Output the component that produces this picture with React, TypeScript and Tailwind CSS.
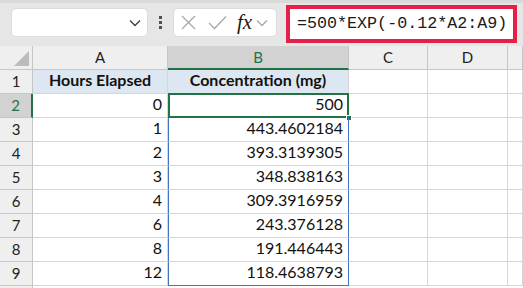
import React from 'react';

const rows: { n: number; a: string; b: string }[] = [
  { n: 2, a: '0', b: '500' },
  { n: 3, a: '1', b: '443.4602184' },
  { n: 4, a: '2', b: '393.3139305' },
  { n: 5, a: '3', b: '348.838163' },
  { n: 6, a: '4', b: '309.3916959' },
  { n: 7, a: '6', b: '243.376128' },
  { n: 8, a: '8', b: '191.446443' },
  { n: 9, a: '12', b: '118.4638793' },
];

const Chevron = ({ color }: { color: string }) => (
  <svg width="12" height="8" viewBox="0 0 12 8" fill="none">
    <path d="M1 1.5 L6 6.5 L11 1.5" stroke={color} strokeWidth="1.4" />
  </svg>
);

const Toolbar = () => (
  <div className="relative h-[46px] bg-[#e6e6e6]">
    <div className="h-[3px] bg-[#dadada]" />
    <div className="flex items-center h-[36px] pt-[3px]">
      {/* name box */}
      <div className="ml-[11px] w-[137px] h-[29px] bg-white rounded-[5px] border border-[#dcdcdc] flex items-center justify-end pr-[6px]">
        <Chevron color="#404040" />
      </div>
      {/* grip */}
      <div className="ml-[11px] flex flex-col gap-[2px]">
        <div className="w-[3px] h-[3px] bg-[#505050]" />
        <div className="w-[3px] h-[3px] bg-[#505050]" />
        <div className="w-[3px] h-[3px] bg-[#505050]" />
      </div>
      {/* fx buttons */}
      <div className="ml-[11px] w-[104px] h-[29px] bg-white rounded-[5px] border border-[#dcdcdc] flex items-center">
        <svg className="ml-[7px]" width="15" height="15" viewBox="0 0 15 15" fill="none">
          <path d="M1 1 L14 14 M14 1 L1 14" stroke="#a8a8a8" strokeWidth="1.3" />
        </svg>
        <svg className="ml-[12px]" width="19" height="15" viewBox="0 0 19 15" fill="none">
          <path d="M1 8 L6.5 13.5 L18 1.5" stroke="#a8a8a8" strokeWidth="1.3" />
        </svg>
        <span className="ml-[10px] font-['Liberation_Serif',serif] italic text-[21px] leading-none text-[#1a1a1a]">fx</span>
        <span className="ml-[4px]"><Chevron color="#a8a8a8" /></span>
      </div>
      {/* formula bar */}
      <div className="ml-[9px] w-[231px] h-[38px] mt-[3px] border-[4px] border-[#e4204a] bg-white flex items-center pl-[7px]">
        <span className="font-['Liberation_Mono',monospace] text-[16.7px] text-[#1a1a1a]">=500*EXP(-0.12*A2:A9)</span>
      </div>
    </div>
  </div>
);

const hdr = 'h-[24px] flex items-center justify-center bg-[#efefef] border-r border-b border-[#c6c6c6] text-[15px] text-[#222]';
const rowHdr = 'h-[24px] flex items-center justify-center bg-[#efefef] border-r border-b border-[#c6c6c6] text-[15px] text-[#222]';
const cell = 'h-[24px] flex items-end justify-end pr-[5px] pb-[1px] border-r border-b border-[#d6d6d6] text-[16px] text-[#111]';

export default function App() {
  return (
    <div className="w-[523px] h-[288px] overflow-hidden bg-white font-['Lato','Noto_Sans',sans-serif]">
      <Toolbar />
      <div className="grid grid-cols-[33px_135px_181px_79px_80px_1fr]">
        {/* column headers */}
        <div className={hdr + ' relative'}>
          <svg className="absolute right-[3px] bottom-[3px]" width="15" height="15" viewBox="0 0 15 15">
            <path d="M15 0 L15 15 L0 15 Z" fill="#bcbcbc" />
          </svg>
        </div>
        <div className={hdr}>A</div>
        <div className="h-[24px] flex items-center justify-center bg-[#d2d2d2] border-r border-[#c6c6c6] border-b-2 border-b-[#217346] text-[15px] text-[#217346]">B</div>
        <div className={hdr}>C</div>
        <div className={hdr}>D</div>
        <div className={hdr}></div>

        {/* row 1 */}
        <div className={rowHdr}>1</div>
        <div className="h-[24px] flex items-end justify-center pb-[1px] bg-[#dde7f2] border-r border-b border-[#d6d6d6] text-[16px] font-bold text-[#111]">Hours Elapsed</div>
        <div className="h-[24px] flex items-end justify-center pb-[1px] bg-[#dde7f2] border-r border-b border-[#d6d6d6] text-[16px] font-bold text-[#111]">Concentration (mg)</div>
        <div className={cell}></div>
        <div className={cell}></div>
        <div className={cell}></div>

        {rows.map((r) => {
          const sel = r.n === 2;
          const last = r.n === 9;
          return (
            <React.Fragment key={r.n}>
              <div
                className={
                  sel
                    ? 'h-[24px] flex items-center justify-center bg-[#d2d2d2] border-r-2 border-r-[#217346] border-b border-[#c6c6c6] text-[15px] text-[#217346]'
                    : rowHdr
                }
              >
                {r.n}
              </div>
              <div className={cell}>{r.a}</div>
              <div
                className={
                  'relative h-[24px] flex items-end justify-end pr-[5px] pb-[1px] border-x border-[#4472c4] text-[16px] text-[#111] ' +
                  (last ? 'border-b border-b-[#4472c4]' : 'border-b border-b-[#d6d6d6]')
                }
              >
                {r.b}
                {sel && (
                  <>
                    <div className="absolute -left-[1px] -top-[1px] -right-[1px] -bottom-[1px] border-2 border-[#217346]" />
                    <div className="absolute -right-[4px] -bottom-[4px] w-[6px] h-[6px] bg-[#217346] border border-white" />
                  </>
                )}
              </div>
              <div className={cell}></div>
              <div className={cell}></div>
              <div className={cell}></div>
            </React.Fragment>
          );
        })}
        <div className={rowHdr}></div>
      </div>
    </div>
  );
}
